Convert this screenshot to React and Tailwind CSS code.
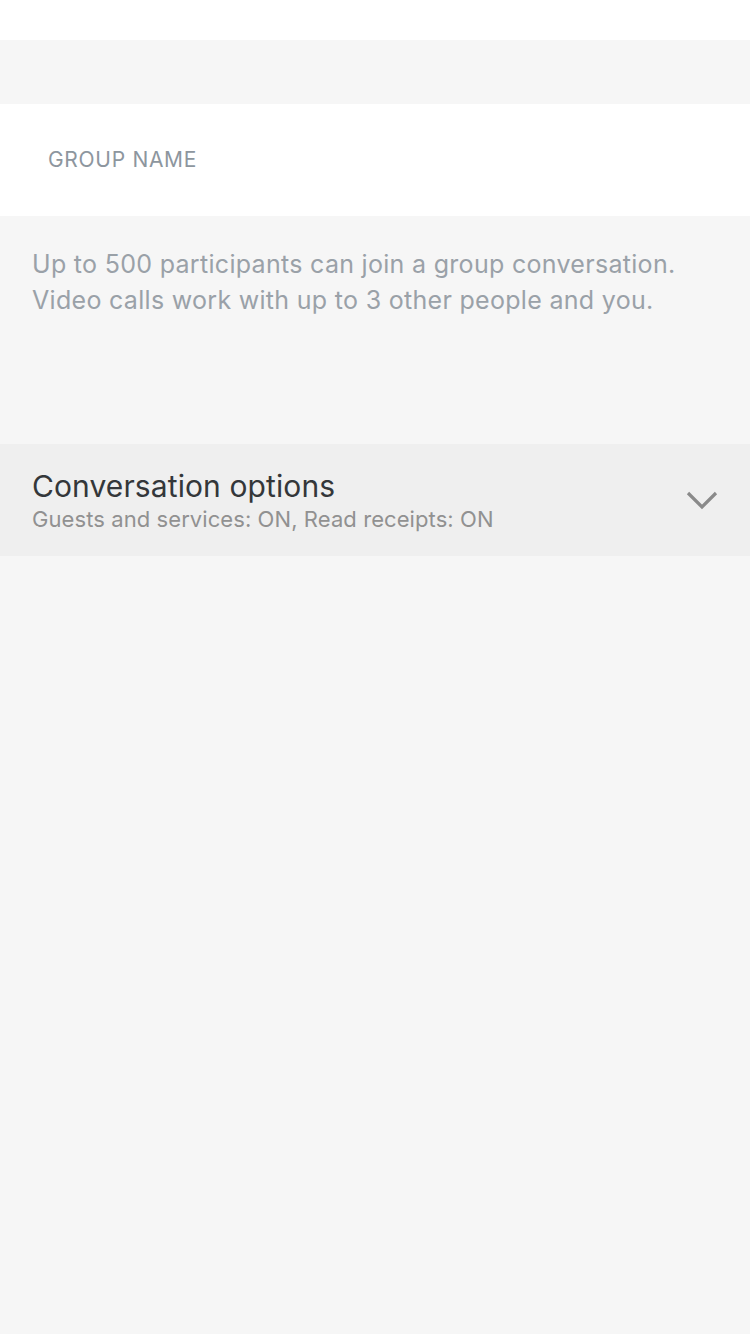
import React from 'react';

const ChevronDown = () => (
  <svg width="32" height="20" viewBox="0 0 32 20" fill="none" className="block">
    <path d="M2 3 L16 17 L30 3" stroke="#8a8a8a" strokeWidth="3.2" />
  </svg>
);

export default function App() {
  return (
    <div
      className="min-h-[1334px] w-[750px] bg-[#f6f6f6] flex flex-col"
      style={{ fontFamily: 'Inter, "Noto Sans", sans-serif' }}
    >
      {/* top bar */}
      <div className="h-[40px] bg-white" />
      <div className="h-[64px]" />

      {/* group name input */}
      <div className="h-[112px] bg-white flex items-center px-[48px]">
        <span className="text-[21px] text-[#8d969e] tracking-[0.7px]">GROUP NAME</span>
      </div>

      {/* info text */}
      <div className="px-[32px] pt-[30px] h-[228px]">
        <p className="text-[25px] leading-[36px] text-[#9aa1a8] tracking-[0.3px]">
          Up to 500 participants can join a group conversation.
          <br />
          Video calls work with up to 3 other people and you.
        </p>
      </div>

      {/* conversation options */}
      <div className="h-[112px] bg-[#efefef] flex items-center justify-between pl-[32px] pr-[32px]">
        <div className="flex flex-col">
          <span className="text-[30px] leading-[38px] text-[#34373a] tracking-[0.1px]">Conversation options</span>
          <span className="text-[22px] leading-[28px] text-[#919191] tracking-[0.08px]">
            Guests and services: ON, Read receipts: ON
          </span>
        </div>
        <ChevronDown />
      </div>

      <div className="flex-1" />
    </div>
  );
}
